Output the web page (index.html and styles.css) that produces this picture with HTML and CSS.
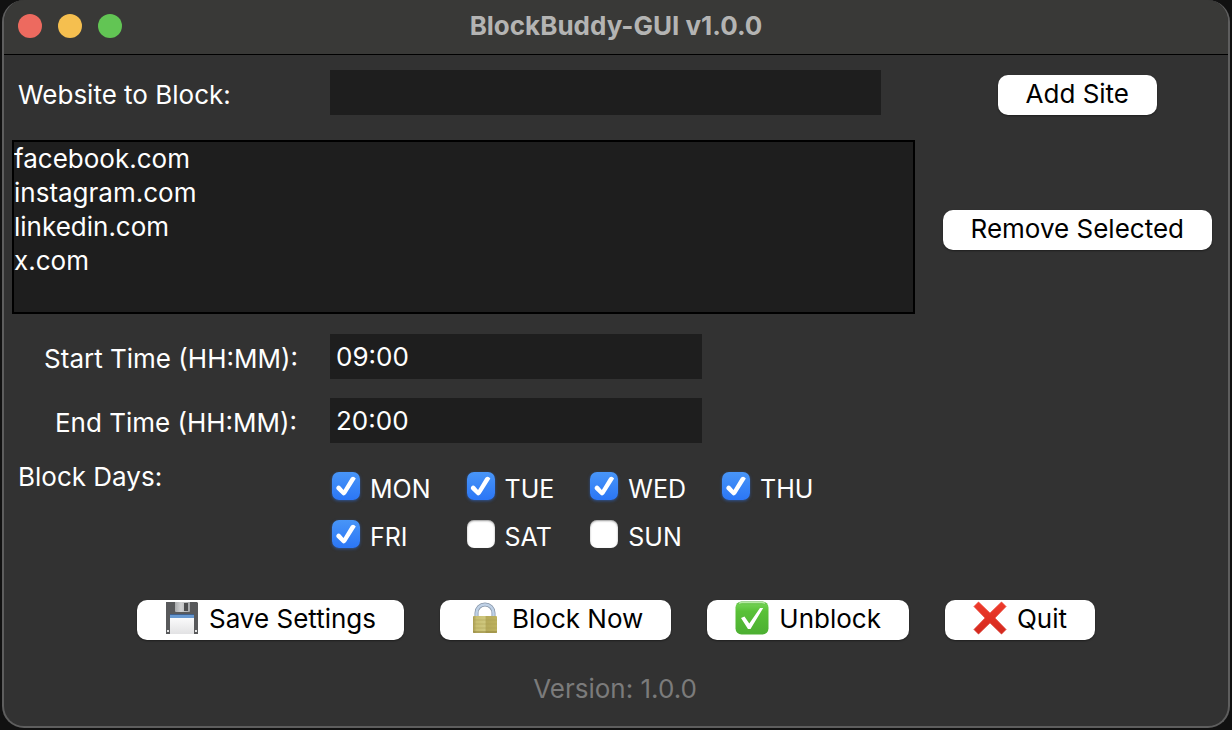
FILE: index.html
```html
<!DOCTYPE html>
<html lang="en">
<head>
<meta charset="utf-8">
<title>BlockBuddy-GUI v1.0.0</title>
<link rel="stylesheet" href="styles.css">
</head>
<body>
<div class="window">
  <header class="titlebar">
    <div class="lights">
      <button class="light close" type="button" aria-label="Close"></button>
      <button class="light minimize" type="button" aria-label="Minimize"></button>
      <button class="light zoom" type="button" aria-label="Zoom"></button>
    </div>
    <h1 class="title">BlockBuddy-GUI v1.0.0</h1>
  </header>
  <main class="content">
    <form class="form">
      <label class="label" for="site">Website to Block:</label>
      <input class="field wide" id="site" type="text">
      <button class="button" type="button">Add Site</button>

      <select class="sites" multiple size="5" aria-label="Blocked websites">
        <option>facebook.com</option>
        <option>instagram.com</option>
        <option>linkedin.com</option>
        <option>x.com</option>
      </select>
      <button class="button" type="button">Remove Selected</button>

      <label class="label centered" for="start">Start Time (HH:MM):</label>
      <input class="field time" id="start" type="text" value="09:00">

      <label class="label centered indented" for="end">End Time (HH:MM):</label>
      <input class="field time" id="end" type="text" value="20:00">

      <span class="label top" id="days-label">Block Days:</span>
      <div class="days" role="group" aria-labelledby="days-label">
        <label class="day"><input class="check" type="checkbox" checked><span class="day-name">MON</span></label>
        <label class="day"><input class="check" type="checkbox" checked><span class="day-name">TUE</span></label>
        <label class="day"><input class="check" type="checkbox" checked><span class="day-name">WED</span></label>
        <label class="day"><input class="check" type="checkbox" checked><span class="day-name">THU</span></label>
        <label class="day"><input class="check" type="checkbox" checked><span class="day-name">FRI</span></label>
        <label class="day"><input class="check" type="checkbox"><span class="day-name">SAT</span></label>
        <label class="day"><input class="check" type="checkbox"><span class="day-name">SUN</span></label>
      </div>
    </form>
    <div class="actions">
      <button class="button" type="button">
        <svg class="icon" viewBox="0 0 34 34" aria-hidden="true">
          <defs><linearGradient id="paper" x1="0" y1="0" x2="0" y2="1"><stop offset="0" stop-color="#fff"/><stop offset="1" stop-color="#e2e2e4"/></linearGradient>
          <linearGradient id="shutter" x1="0" y1="0" x2="1" y2="0"><stop offset="0" stop-color="#a9abad"/><stop offset=".4" stop-color="#d0d1d2"/><stop offset="1" stop-color="#a3a5a7"/></linearGradient></defs>
          <path d="M1 1h31l1 1v31H1z" fill="#58595b"/>
          <path d="M10 1h15v9q0 1-1 1H11q-1 0-1-1V1z" fill="url(#shutter)"/>
          <rect x="19" y="2" width="4" height="8" fill="#4c4d4f"/>
          <path d="M5 14h24v19H5z" fill="url(#paper)"/>
          <path d="M5 14h24v3H5z" fill="#6798d0"/>
          <path d="M5 13h24v1H5z" fill="#3f5f8b"/>
          <path d="M2 29h2v2H2zM30 29h2v2h-2z" fill="#e6e6e6"/>
        </svg>
        <span>Save Settings</span>
      </button>
      <button class="button" type="button">
        <svg class="icon" viewBox="0 0 34 34" aria-hidden="true">
          <defs><linearGradient id="brass" x1="0" y1="0" x2="1" y2="0"><stop offset="0" stop-color="#a99c52"/><stop offset=".15" stop-color="#c9bf72"/><stop offset=".5" stop-color="#cec77e"/><stop offset=".55" stop-color="#b5a95a"/><stop offset="1" stop-color="#bdb25f"/></linearGradient></defs>
          <path d="M8.500 16V12a8.500 8.500 0 0 1 17 0v4" fill="none" stroke="#8796a8" stroke-width="4"/>
          <path d="M8.500 16V12a8.500 8.500 0 0 1 17 0v4" fill="none" stroke="#bfd1e6" stroke-width="2.500"/>
          <rect x="5" y="15" width="24" height="17" rx="1" fill="url(#brass)"/>
          <path d="M5 19h24M5 23h24M5 27h24" stroke="#a99d50" stroke-width=".5"/>
          <path d="M5 31h24" stroke="#8f823d"/>
        </svg>
        <span>Block Now</span>
      </button>
      <button class="button" type="button">
        <svg class="icon" viewBox="0 0 34 34" aria-hidden="true">
          <defs><linearGradient id="green" x1="0" y1="0" x2="0" y2="1"><stop offset="0" stop-color="#46a52a"/><stop offset=".1" stop-color="#6fd050"/><stop offset=".3" stop-color="#59c137"/><stop offset="1" stop-color="#4caf32"/></linearGradient></defs>
          <rect x="0.500" y="0.500" width="33" height="33" rx="6" fill="url(#green)"/>
          <path d="M4 2.500q1-1 3-1h20q2 0 3 1" fill="none" stroke="#b5eba2" stroke-width="1.500"/>
          <path d="M6 17l3.500-1.500 4.800 7L25 7h3.200L15.500 28h-2.500z" fill="#fff"/>
        </svg>
        <span>Unblock</span>
      </button>
      <button class="button" type="button">
        <svg class="icon" viewBox="0 0 34 34" aria-hidden="true">
          <defs><linearGradient id="red" x1="0" y1="0" x2="0" y2="1"><stop offset="0" stop-color="#ef3b2b"/><stop offset="1" stop-color="#d3281d"/></linearGradient></defs>
          <path d="M5.500 1L17 12.200 28.500 1 33 5.500 21.800 17 33 28.500 28.500 33 17 21.800 5.500 33 1 28.500 12.200 17 1 5.500z" fill="url(#red)" stroke="url(#red)" stroke-width=".8"/>
        </svg>
        <span>Quit</span>
      </button>
    </div>
    <p class="version">Version: 1.0.0</p>
  </main>
</div>
</body>
</html>
```
FILE: styles.css
```css
* {
  box-sizing: border-box;
}

body {
  margin: 0;
  padding: 0 2px 2px;
  min-height: 100vh;
  display: flex;
  background: #111;
  color: #fff;
  font: 26px/30px Inter, "Liberation Sans", sans-serif;
}

button,
input,
select {
  font: inherit;
  margin: 0;
}

.window {
  flex: 1;
  display: flex;
  flex-direction: column;
  overflow: hidden;
  border: 2px solid #5e5e5e;
  border-top: 0;
  border-radius: 22px;
  background: #323232;
}

.titlebar {
  display: grid;
  grid-template-columns: 1fr auto 1fr;
  align-items: center;
  height: 55px;
  padding: 0 14px 2px;
  background: #393937;
  border-bottom: 1px solid #000;
}

.lights {
  display: flex;
  gap: 16px;
}

.light {
  width: 24px;
  height: 24px;
  padding: 0;
  border: 0;
  border-radius: 50%;
}

.close {
  background: #ed6a5f;
}

.minimize {
  background: #f5bf4f;
}

.zoom {
  background: #62c554;
}

.title {
  margin: 0;
  font-size: 26px;
  font-weight: 700;
  color: #b4b4b3;
}

.content {
  padding: 15px 16px 0 8px;
}

.form {
  display: grid;
  grid-template-columns: 318px 1fr auto;
  row-gap: 19px;
  align-items: center;
}

.label {
  grid-column: 1;
  padding: 4px 6px 0;
}

.label.centered {
  text-align: center;
}

.label.indented {
  padding-left: 16px;
}

.label.top {
  align-self: start;
  padding-top: 0;
}

.field {
  height: 45px;
  padding: 0 6px;
  border: 0;
  border-radius: 0;
  background: #1e1e1e;
  color: #fff;
  outline: none;
}

.wide {
  margin-right: 34px;
}

.time {
  grid-column: 2;
  width: 372px;
}

.form .button {
  justify-self: center;
  margin: 5px 0 0 28px;
}

.sites {
  grid-column: 1 / 3;
  width: 100%;
  height: 174px;
  margin: 6px 0 1px;
  padding: 0;
  overflow: hidden;
  border: 2px solid #000;
  border-radius: 0;
  background: #1e1e1e;
  color: #fff;
  outline: none;
}

.sites option {
  height: 34px;
  min-height: 34px;
  padding: 1px 0 0;
  line-height: 33px;
}

.form .sites + .button {
  margin-top: 10px;
}

.button {
  display: flex;
  align-items: center;
  justify-content: center;
  gap: 10px;
  height: 40px;
  padding: 0 28px 2px;
  border: 0;
  border-radius: 10px;
  background: #fff;
  box-shadow: 0 1px 2px #0006;
  color: #000;
  white-space: nowrap;
}

.icon {
  width: 34px;
  height: 34px;
  margin-bottom: 2px;
}

.days {
  grid-column: 2 / 4;
  justify-self: start;
  display: grid;
  grid-template-columns: repeat(4, auto);
  gap: 16px 36px;
  padding: 10px 0 0 2px;
  font-size: 25px;
}

.day {
  display: flex;
  gap: 10px;
}

.day-name {
  padding-top: 2px;
}

.check {
  appearance: none;
  flex: none;
  width: 28px;
  height: 28px;
  border-radius: 7px;
  background: #fff;
  box-shadow: inset 0 1px 2px #0006;
  display: grid;
}

.check:checked {
  background: linear-gradient(#4895f7, #2b76f6);
  box-shadow: 0 1px 3px #2b76f680;
}

.check:checked::before {
  content: "";
  background: #fff;
  clip-path: path("M4.500 15Q6.500 12.500 8.500 14.500L11.500 18 18.900 5.800Q21.500 3.500 23.800 6.500L14 22Q12 24.500 10 22.500L4.800 17.500Q3.800 16.300 4.500 15Z");
}

.actions {
  display: flex;
  justify-content: center;
  gap: 36px;
  margin-top: 48px;
  padding-left: 8px;
}

.version {
  margin: 34px 0 0;
  padding-left: 6px;
  text-align: center;
  color: #7b7b7b;
}
```
